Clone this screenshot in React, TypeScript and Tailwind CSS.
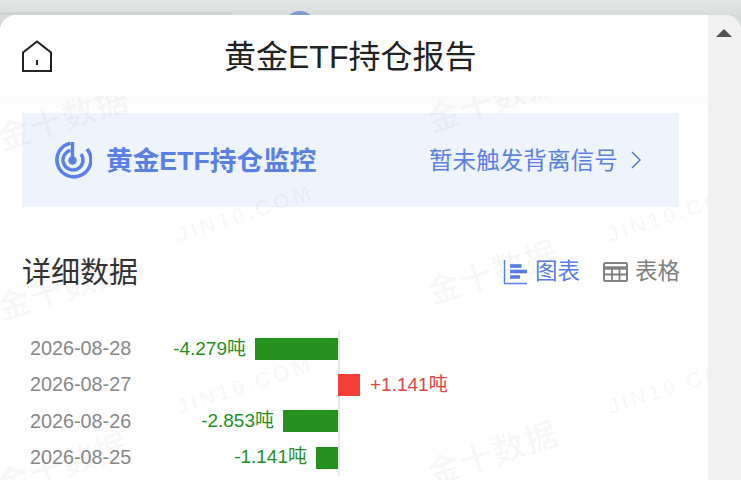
import React from 'react';

const font = '[font-family:"Liberation_Sans","Noto_Sans_CJK_SC",sans-serif]';

const rows = [
  { date: '2026-08-28', value: '-4.279吨', bar: 'w-[83px]', up: false },
  { date: '2026-08-27', value: '+1.141吨', bar: 'w-[22px]', up: true },
  { date: '2026-08-26', value: '-2.853吨', bar: 'w-[55px]', up: false },
  { date: '2026-08-25', value: '-1.141吨', bar: 'w-[22px]', up: false },
];

const cn = 'text-[33px] tracking-[1px]';
const en = 'text-[22px] tracking-[3px]';

const marks = [
  { text: '金十数据', cls: `left-[-5px] top-[79px] ${cn}` },
  { text: '金十数据', cls: `left-[425px] top-[61px] ${cn}` },
  { text: '金十数据', cls: `left-[-5px] top-[249px] ${cn}` },
  { text: '金十数据', cls: `left-[425px] top-[233px] ${cn}` },
  { text: '金十数据', cls: `left-[-5px] top-[426px] ${cn}` },
  { text: '金十数据', cls: `left-[425px] top-[414px] ${cn}` },
  { text: 'JIN10.COM', cls: `left-[173px] top-[182px] ${en}` },
  { text: 'JIN10.COM', cls: `left-[604px] top-[182px] ${en}` },
  { text: 'JIN10.COM', cls: `left-[173px] top-[354px] ${en}` },
  { text: 'JIN10.COM', cls: `left-[604px] top-[354px] ${en}` },
];

function HomeIcon() {
  return (
    <svg width="30" height="32" viewBox="0 0 30 32" fill="none" stroke="#222" strokeWidth="2">
      <path d="M1 31V12.5L15 1.5L29 12.5V31Z" strokeLinejoin="miter" />
      <path d="M15 20V25" />
    </svg>
  );
}

function RadarIcon() {
  return (
    <svg width="38" height="38" viewBox="0 0 38 38" fill="none" stroke="#5b80e4">
      <path d="M16.5 2.2A17 17 0 1 0 33 8" strokeWidth="3.6" strokeLinecap="butt" />
      <path d="M16.5 9.3A10 10 0 1 0 27 13" strokeWidth="3.4" />
      <path d="M18.5 1V19" strokeWidth="3.4" />
      <circle cx="18.5" cy="19.5" r="4.2" fill="#5b80e4" stroke="none" />
    </svg>
  );
}

function ChartIcon() {
  return (
    <svg width="24" height="25" viewBox="0 0 24 25" fill="none" stroke="#5b80e4">
      <path d="M1.5 0V23.5H24" strokeWidth="1.4" />
      <path d="M7 6H18.5" strokeWidth="3.6" />
      <path d="M7 11.5H24" strokeWidth="3.6" />
      <path d="M7 17H17" strokeWidth="3.6" />
    </svg>
  );
}

function TableIcon() {
  return (
    <svg width="25" height="20" viewBox="0 0 25 20" fill="none" stroke="#808080">
      <rect x="1" y="1" width="23" height="18" rx="1.5" strokeWidth="2" />
      <path d="M1 6H24" strokeWidth="3.4" />
      <path d="M1 12.5H24M9 6V19M16.5 6V19" strokeWidth="1.8" />
    </svg>
  );
}

export default function App() {
  return (
    <div className={`h-[480px] w-[741px] overflow-hidden bg-[#d8dbdb] ${font}`}>
      {/* 뒤쪽 페이지가 살짝 보이는 부분 */}
      <div className="relative h-[15px] overflow-hidden bg-gradient-to-b from-[#e6e8e8] to-[#d9dcdc]">
        <div className="absolute left-0 top-[12px] h-[3px] w-[232px] bg-[#d0d3d3]" />
        <div className="absolute left-[284px] top-[11px] h-[32px] w-[32px] rounded-full bg-[#7c9bd0]" />
      </div>

      <div className="flex h-[465px] overflow-hidden rounded-t-[16px] bg-white">
        <div className="relative w-[708px] overflow-hidden">
          {/* 헤더 */}
          <div className="relative z-10 flex h-[81px] items-center bg-white px-[22px] shadow-[0_8px_16px_rgba(0,0,0,0.025)]">
            <HomeIcon />
            <h1 className="ml-[172px] pt-[3px] text-[32px] leading-none text-[#222]">黄金ETF持仓报告</h1>
          </div>

          {/* 배너 */}
          <div className="mx-[22px] mt-[17px] flex h-[94px] w-[657px] items-center justify-between bg-[#eef3fe] pl-[32px] pr-[37px]">
            <div className="flex items-center gap-[14px]">
              <RadarIcon />
              <span className="pt-[3px] text-[26.7px] font-bold text-[#5b80e4]">黄金ETF持仓监控</span>
            </div>
            <div className="flex items-center gap-[13px] text-[23.6px] text-[#5b80e4]">
              <span className="w-[188px] whitespace-nowrap pt-[3px]">暂未触发背离信号</span>
              <svg width="12" height="20" viewBox="0 0 12 20" fill="none" stroke="#5b80e4" strokeWidth="1.6">
                <path d="M2 2L10 10L2 18" />
              </svg>
            </div>
          </div>

          {/* 상세 데이터 */}
          <div className="mx-[22px] mt-[45px] flex h-[40px] w-[658px] items-center justify-between">
            <h2 className="pt-[4px] text-[29px] text-[#333]">详细数据</h2>
            <div className="flex items-center text-[22.5px]">
              <div className="flex items-center gap-[8px] text-[#5b80e4]">
                <ChartIcon />
                <span>图表</span>
              </div>
              <div className="ml-[23px] flex items-center gap-[7px] text-[#808080]">
                <TableIcon />
                <span>表格</span>
              </div>
            </div>
          </div>

          {/* 차트 */}
          <div className="mt-[39px] flex flex-col">
            {rows.map((r) => (
              <div key={r.date} className="flex h-[36.2px]">
                <div className="flex w-[338px] items-center">
                  <span className="ml-[30px] w-[104px] whitespace-nowrap text-[19.8px] text-[#888888]">{r.date}</span>
                  {!r.up && (
                    <div className="flex flex-1 items-center justify-end gap-[9px]">
                      <span className="text-[19px] text-[#26901f]">{r.value}</span>
                      <div className={`h-[22px] bg-[#26901f] ${r.bar}`} />
                    </div>
                  )}
                </div>
                <div className="flex items-center border-l-2 border-[#e8e8e8]">
                  {r.up && (
                    <div className="-ml-[2px] flex items-center gap-[10px]">
                      <div className={`h-[22px] bg-[#ef3f37] ${r.bar}`} />
                      <span className="text-[19px] text-[#e04540]">{r.value}</span>
                    </div>
                  )}
                </div>
              </div>
            ))}
          </div>

          {/* 워터마크 */}
          {marks.map((m) => (
            <div
              key={m.text + m.cls}
              className={`pointer-events-none absolute -rotate-[18deg] whitespace-nowrap font-bold text-[rgba(0,0,0,0.03)] ${m.cls}`}
            >
              {m.text}
            </div>
          ))}
        </div>

        {/* 스크롤바 */}
        <div className="flex w-[33px] justify-center bg-[#f1f1f1] pt-[14px] pr-[1px]">
          <div className="h-0 w-0 border-x-[8px] border-b-[8px] border-x-transparent border-b-[#505050]" />
        </div>
      </div>
    </div>
  );
}
